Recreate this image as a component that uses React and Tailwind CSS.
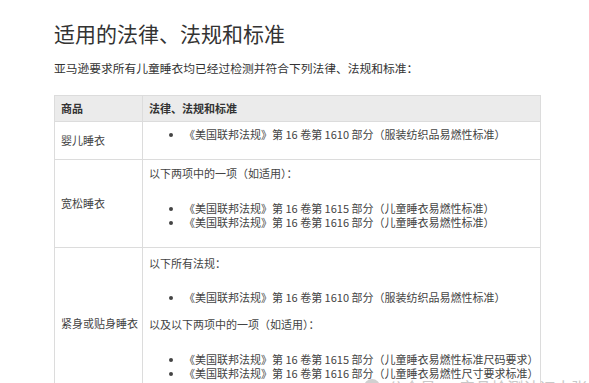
export default function App() {
  const font = { fontFamily: '"Noto Sans CJK SC", "Noto Sans", sans-serif' };
  const Li = ({ children }) => <li className="leading-[14px]">{children}</li>;
  return (
    <div
      className="relative w-[589px] h-[383px] overflow-hidden bg-white pl-[54px] pt-[19px] text-[#444]"
      style={font}
    >
      <h1 className="text-[21px] leading-[28px] text-[#333]">适用的法律、法规和标准</h1>
      <p className="mt-[13px] text-[11.75px] leading-[16px] text-[#333]">
        亚马逊要求所有儿童睡衣均已经过检测并符合下列法律、法规和标准：
      </p>
      <table className="mt-[19px] w-[487px] border-collapse text-[11px] table-fixed">
        <colgroup>
          <col className="w-[88px]" />
          <col />
        </colgroup>
        <thead>
          <tr className="h-[26px] bg-[#ebebeb]">
            <th className="border border-[#dcdcdc] px-[6px] text-left font-bold text-[#333]">商品</th>
            <th className="border border-[#dcdcdc] px-[6px] text-left font-bold text-[#333]">法律、法规和标准</th>
          </tr>
        </thead>
        <tbody>
          <tr>
            <td className="border border-[#dcdcdc] px-[6px] align-middle">婴儿睡衣</td>
            <td className="border border-[#dcdcdc] px-[6px] pt-[5px] align-top">
              <ul className="list-disc pl-[35px] mb-[18px]">
                <Li>《美国联邦法规》第 16 卷第 1610 部分（服装纺织品易燃性标准）</Li>
              </ul>
            </td>
          </tr>
          <tr>
            <td className="border border-[#dcdcdc] px-[6px] align-middle">宽松睡衣</td>
            <td className="border border-[#dcdcdc] px-[6px] pt-[6px] align-top">
              <p className="leading-[14px]">以下两项中的一项（如适用）：</p>
              <ul className="list-disc pl-[35px] mt-[21px] mb-[18px]">
                <Li>《美国联邦法规》第 16 卷第 1615 部分（儿童睡衣易燃性标准）</Li>
                <Li>《美国联邦法规》第 16 卷第 1616 部分（儿童睡衣易燃性标准）</Li>
              </ul>
            </td>
          </tr>
          <tr>
            <td className="border border-[#dcdcdc] px-[6px] align-middle whitespace-nowrap">紧身或贴身睡衣</td>
            <td className="border border-[#dcdcdc] px-[6px] pt-[8px] align-top">
              <p className="leading-[14px]">以下所有法规：</p>
              <ul className="list-disc pl-[35px] mt-[20px]">
                <Li>《美国联邦法规》第 16 卷第 1610 部分（服装纺织品易燃性标准）</Li>
              </ul>
              <p className="leading-[14px] mt-[13px]">以及以下两项中的一项（如适用）：</p>
              <ul className="list-disc pl-[35px] mt-[21px] mb-[18px]">
                <Li>《美国联邦法规》第 16 卷第 1615 部分（儿童睡衣易燃性标准尺码要求）</Li>
                <Li>《美国联邦法规》第 16 卷第 1616 部分（儿童睡衣易燃性尺寸要求标准）</Li>
              </ul>
            </td>
          </tr>
        </tbody>
      </table>
      <div className="absolute left-[364px] top-[377px] flex items-center gap-[8px] text-[16px] leading-[20px] text-[#c8c8c8] whitespace-nowrap">
        <span className="inline-block w-[16px] h-[16px] rounded-full bg-[#d0d0d0]" />
        <span>公众号 · 产品检测认证大张</span>
      </div>
    </div>
  );
}
